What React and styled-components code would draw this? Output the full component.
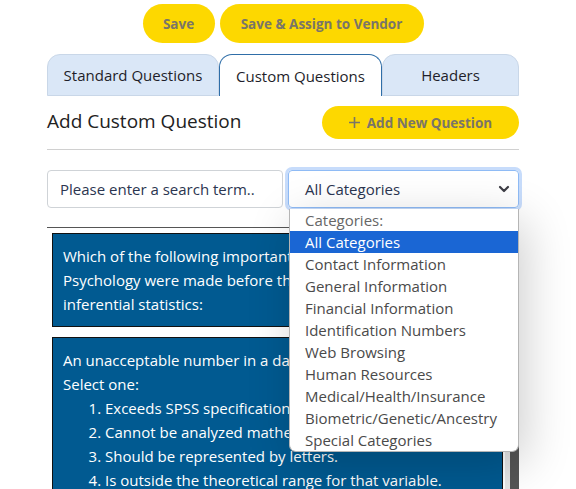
import React from "react";
import styled, { createGlobalStyle } from "styled-components";

const GlobalStyle = createGlobalStyle`
  html, body {
    margin: 0;
    padding: 0;
    overflow: hidden;
    background: #fff;
  }
  body {
    font-family: "Open Sans", "Noto Sans", sans-serif;
    color: #212529;
  }
`;

const Page = styled.div`
  width: 472px;
  margin-left: 47px;
  position: relative;
`;

const Actions = styled.div`
  display: flex;
  justify-content: center;
  gap: 5px;
  padding-top: 4px;
`;

const PillButton = styled.button`
  width: ${(p) => p.$width}px;
  height: ${(p) => p.$height || 39}px;
  padding: 0;
  border: none;
  border-radius: 20px;
  background: #fdd800;
  color: #7a7568;
  font-family: "Open Sans", sans-serif;
  font-weight: 700;
  font-size: 13.5px;
  white-space: nowrap;
  display: flex;
  align-items: center;
  justify-content: center;
  gap: 7px;
  cursor: pointer;
`;

const Tabs = styled.div`
  display: flex;
  margin-top: 11px;
`;

const Tab = styled.div`
  flex: 0 0 ${(p) => p.$width}px;
  height: 42px;
  box-sizing: border-box;
  display: flex;
  align-items: center;
  justify-content: center;
  font-size: 15px;
  color: #1e1e2a;
  border-radius: 13px 13px 0 0;
  background: ${(p) => (p.$active ? "#fff" : "#dae7f7")};
  border: 1px solid ${(p) => (p.$active ? "#2f6ea8" : "#c9d7e8")};
  border-bottom: ${(p) => (p.$active ? "none" : "1px solid #c9d7e8")};
`;

const HeaderRow = styled.div`
  display: flex;
  justify-content: space-between;
  align-items: center;
  margin-top: 10px;
  padding-bottom: 10px;
  border-bottom: 1px solid #d0d0d0;
`;

const Heading = styled.h2`
  margin: 0 0 3px;
  font-size: 19px;
  font-weight: 400;
  color: #222;
`;

const Filters = styled.div`
  display: flex;
  gap: 5px;
  margin-top: 20px;
  position: relative;
`;

const SearchInput = styled.input`
  width: 236px;
  height: 38px;
  box-sizing: border-box;
  border: 1px solid #cfd3d7;
  border-radius: 4px;
  padding: 0 12px;
  font-family: "Open Sans", sans-serif;
  font-size: 15px;
  color: #2b3550;
  &::placeholder {
    color: #2b3550;
  }
`;

const SelectBox = styled.div`
  width: 231px;
  height: 38px;
  box-sizing: border-box;
  border: 1px solid #8fbbf5;
  border-radius: 4px;
  box-shadow: 0 0 0 3px #c7dcfb;
  display: flex;
  align-items: center;
  justify-content: space-between;
  padding: 0 8px 0 16px;
  font-size: 15px;
  color: #2b3550;
`;

const Menu = styled.div`
  position: absolute;
  left: 242px;
  top: 39px;
  width: 230px;
  box-sizing: border-box;
  background: #fff;
  border: 1px solid #b5b5b5;
  border-top: none;
  border-radius: 0 0 7px 7px;
  box-shadow: 6px 12px 48px rgba(0, 0, 0, 0.2);
  z-index: 5;
  overflow: hidden;
`;

const MenuItem = styled.div`
  height: 22px;
  line-height: 22px;
  padding-left: 15px;
  font-size: 15px;
  white-space: nowrap;
  color: ${(p) => (p.$selected ? "#fff" : p.$label ? "#666" : "#4a4a4a")};
  background: ${(p) => (p.$selected ? "#1a66d4" : "transparent")};
`;

const List = styled.div`
  margin-top: 19px;
  height: 300px;
  border-top: 1px solid #555;
  display: flex;
  overflow: hidden;
`;

const Cards = styled.div`
  flex: 1;
  padding: 5px 2px 0 5px;
  overflow: hidden;
`;

const ScrollTrack = styled.div`
  flex: 0 0 14px;
  background: #e6e6e6;
  display: flex;
  justify-content: flex-end;
`;

const ScrollThumb = styled.div`
  width: 9px;
  height: 280px;
  background: #555;
`;

const Card = styled.div`
  background: #015a91;
  border: 1px solid #111;
  color: #fff;
  font-size: 15px;
  line-height: 24px;
  padding: 10px 10px;
  margin-bottom: 10px;
`;

const Options = styled.ol`
  margin: 0;
  padding-left: 42px;
`;

const Chevron = () => (
  <svg width="12" height="8" viewBox="0 0 12 8">
    <path d="M2 2l4 4 4-4" fill="none" stroke="#3d3d45" strokeWidth="2.2" strokeLinecap="round" strokeLinejoin="round" />
  </svg>
);

const Plus = () => (
  <svg width="11" height="11" viewBox="0 0 11 11">
    <path d="M5.5 0v11M0 5.5h11" stroke="#7a7568" strokeWidth="1.6" />
  </svg>
);

const categories = [
  "Contact Information",
  "General Information",
  "Financial Information",
  "Identification Numbers",
  "Web Browsing",
  "Human Resources",
  "Medical/Health/Insurance",
  "Biometric/Genetic/Ancestry",
  "Special Categories",
];

export default function App() {
  return (
    <>
      <GlobalStyle />
      <Page>
        <Actions>
          <PillButton $width={72}>Save</PillButton>
          <PillButton $width={204}>Save &amp; Assign to Vendor</PillButton>
        </Actions>
        <Tabs>
          <Tab $width={172}>Standard Questions</Tab>
          <Tab $width={163} $active>Custom Questions</Tab>
          <Tab $width={137}>Headers</Tab>
        </Tabs>
        <HeaderRow>
          <Heading>Add Custom Question</Heading>
          <PillButton $width={197} $height={33}>
            <Plus />
            Add New Question
          </PillButton>
        </HeaderRow>
        <Filters>
          <SearchInput placeholder="Please enter a search term.." />
          <SelectBox>
            All Categories
            <Chevron />
          </SelectBox>
          <Menu>
            <MenuItem $label>Categories:</MenuItem>
            <MenuItem $selected>All Categories</MenuItem>
            {categories.map((c) => (
              <MenuItem key={c}>{c}</MenuItem>
            ))}
          </Menu>
        </Filters>
        <List>
          <Cards>
            <Card>
              Which of the following important discoveries in
              <br />
              Psychology were made before the development of
              <br />
              inferential statistics:
            </Card>
            <Card>
              An unacceptable number in a data set:
              <br />
              Select one:
              <Options>
                <li>Exceeds SPSS specifications.</li>
                <li>Cannot be analyzed mathematically.</li>
                <li>Should be represented by letters.</li>
                <li>Is outside the theoretical range for that variable.</li>
              </Options>
            </Card>
          </Cards>
          <ScrollTrack>
            <ScrollThumb />
          </ScrollTrack>
        </List>
      </Page>
    </>
  );
}
